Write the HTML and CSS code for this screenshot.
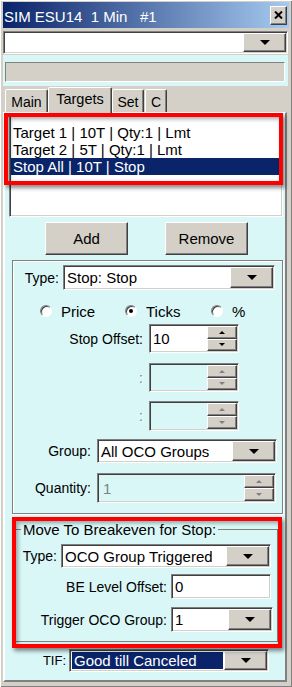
FILE: index.html
```html
<!DOCTYPE html>
<html>
<head>
<meta charset="utf-8">
<title>SIM ESU14 1 Min #1</title>
<link rel="stylesheet" href="styles.css">
</head>
<body>
<div class="window">
    <div class="titlebar">
        <span class="title">SIM ESU14  1 Min   #1</span>
        <span class="close"><svg width="9" height="8" viewBox="0 0 9 8"><path d="M1 0.5 L8 7.5 M8 0.5 L1 7.5" stroke="#000" stroke-width="2"/></svg></span>
    </div>

    <div class="combo top-combo">
        <div class="field"></div>
        <div class="drop"><i class="tri"></i></div>
    </div>

    <div class="strip"><div class="status"></div></div>

    <div class="tabs">
        <div class="tab tab-main">Main</div>
        <div class="tab tab-targets active">Targets</div>
        <div class="tab tab-set">Set</div>
        <div class="tab tab-c">C</div>
    </div>

    <div class="page">
        <div class="list">
            <div class="item">Target 1 | 10T | Qty:1 | Lmt</div>
            <div class="item">Target 2 | 5T | Qty:1 | Lmt</div>
            <div class="item selected">Stop All | 10T | Stop</div>
        </div>

        <div class="buttons">
            <div class="btn">Add</div>
            <div class="btn">Remove</div>
        </div>

        <div class="panel">
            <div class="row row-type">
                <span class="label">Type:</span>
                <div class="combo combo-type">
                    <div class="field">Stop: Stop</div>
                    <div class="drop"><i class="tri"></i></div>
                </div>
            </div>

            <div class="radios">
                <span class="opt opt-price"><i class="radio"></i>Price</span>
                <span class="opt opt-ticks"><i class="radio checked"></i>Ticks</span>
                <span class="opt"><i class="radio"></i>%</span>
            </div>

            <div class="row row-stop">
                <span class="label">Stop Offset:</span>
                <div class="spin spin-small">
                    <div class="field">10</div>
                    <div class="arrows">
                        <div class="arrow"><i class="up"></i></div>
                        <div class="arrow"><i class="down"></i></div>
                    </div>
                </div>
            </div>

            <div class="row row-dis1">
                <span class="label dim">:</span>
                <div class="spin spin-small disabled">
                    <div class="field"></div>
                    <div class="arrows">
                        <div class="arrow"><i class="up"></i></div>
                        <div class="arrow"><i class="down"></i></div>
                    </div>
                </div>
            </div>

            <div class="row row-dis2">
                <span class="label dim">:</span>
                <div class="spin spin-small disabled">
                    <div class="field"></div>
                    <div class="arrows">
                        <div class="arrow"><i class="up"></i></div>
                        <div class="arrow"><i class="down"></i></div>
                    </div>
                </div>
            </div>

            <div class="row row-group">
                <span class="label">Group:</span>
                <div class="combo combo-group">
                    <div class="field">All OCO Groups</div>
                    <div class="drop"><i class="tri"></i></div>
                </div>
            </div>

            <div class="row row-qty">
                <span class="label">Quantity:</span>
                <div class="spin spin-qty disabled">
                    <div class="field">1</div>
                    <div class="arrows">
                        <div class="arrow"><i class="up"></i></div>
                        <div class="arrow"><i class="down"></i></div>
                    </div>
                </div>
            </div>
        </div>

        <fieldset class="be">
            <legend>Move To Breakeven for Stop:</legend>
            <div class="row be-type">
                <span class="label">Type:</span>
                <div class="combo combo-be">
                    <div class="field">OCO Group Triggered</div>
                    <div class="drop"><i class="tri"></i></div>
                </div>
            </div>
            <div class="row be-offset">
                <span class="label">BE Level Offset:</span>
                <div class="textbox">0</div>
            </div>
            <div class="row be-trigger">
                <span class="label">Trigger OCO Group:</span>
                <div class="combo combo-trigger">
                    <div class="field">1</div>
                    <div class="drop"><i class="tri"></i></div>
                </div>
            </div>
        </fieldset>

        <div class="row row-tif">
            <span class="label">TIF:</span>
            <div class="combo combo-tif">
                <div class="field sel">Good till Canceled</div>
                <div class="drop"><i class="tri"></i></div>
            </div>
        </div>

        <div class="mark mark-list"></div>
        <div class="mark mark-be"></div>
    </div>
</div>
</body>
</html>
```

FILE: styles.css
```css
body {
    margin: 0;
    background: #d4d0c8;
    font-family: "Liberation Sans", Arial, sans-serif;
    font-size: 14px;
    color: #000;
}

.window {
    width: 292px;
    height: 687px;
    box-sizing: border-box;
    padding: 2px 3px 5px 3px;
    display: flex;
    flex-direction: column;
    background: #d4d0c8;
    box-shadow: inset 1px 1px #fff, inset -1px -1px #808080;
}

/* title bar */
.titlebar {
    flex: none;
    height: 26px;
    display: flex;
    align-items: center;
    justify-content: space-between;
    background: linear-gradient(to right, #0a246a, #a6caf0);
    color: #fff;
}
.title {
    white-space: pre;
    font-size: 15px;
    padding-left: 1px;
    padding-top: 3px;
}
.close {
    width: 15px;
    height: 17px;
    margin-right: 2px;
    background: #d4d0c8;
    border: 1px solid;
    border-color: #fff #404040 #404040 #fff;
    box-shadow: inset -1px -1px #808080;
    display: flex;
    align-items: center;
    justify-content: center;
}

/* shared controls */
.combo, .spin, .textbox {
    box-sizing: border-box;
    display: flex;
    border: 1px solid;
    border-color: #808080 #fff #fff #808080;
    box-shadow: inset 1px 1px #404040, inset -1px -1px #d4d0c8;
    padding: 1px;
    background: #fff;
}
.field {
    flex: 1;
    display: flex;
    align-items: center;
    padding-left: 2px;
    font-size: 15px;
    background: #fff;
    white-space: nowrap;
    overflow: hidden;
}
.field.sel {
    background: #0a246a;
    color: #fff;
    margin: 1px;
}
.drop {
    flex: none;
    width: 43px;
    box-sizing: border-box;
    border: 1px solid;
    border-color: #fff #404040 #404040 #fff;
    box-shadow: inset -1px -1px #808080;
    background: #d4d0c8;
    display: flex;
    align-items: center;
    justify-content: center;
}
.tri {
    width: 0;
    height: 0;
    border-left: 5px solid transparent;
    border-right: 5px solid transparent;
    border-top: 5px solid #000;
}
.arrows {
    flex: none;
    width: 30px;
    display: flex;
    flex-direction: column;
}
.arrow {
    flex: 1;
    box-sizing: border-box;
    border: 1px solid;
    border-color: #fff #404040 #404040 #fff;
    box-shadow: inset -1px -1px #808080;
    background: #d4d0c8;
    display: flex;
    align-items: center;
    justify-content: center;
}
.up, .down {
    width: 0;
    height: 0;
    border-left: 3px solid transparent;
    border-right: 3px solid transparent;
}
.up {
    border-bottom: 3px solid #000;
}
.down {
    border-top: 3px solid #000;
}
.disabled .field {
    background: #daf7f7;
    color: #808080;
}
.disabled .up {
    border-bottom-color: #808080;
}
.disabled .down {
    border-top-color: #808080;
}
.textbox {
    align-items: center;
    padding-left: 3px;
    font-size: 15px;
}

.top-combo {
    flex: none;
    margin-top: 3px;
    height: 23px;
    width: 285px;
}

.strip {
    flex: none;
    margin-top: 1px;
    margin-right: 1px;
    height: 31px;
    box-sizing: border-box;
    padding: 7px 3px 0 2px;
    background: #daf7f7;
}
.status {
    height: 20px;
    box-sizing: border-box;
    border: 1px solid;
    border-color: #808080 #fff #fff #808080;
    background: #d4d0c8;
}

/* tabs */
.tabs {
    flex: none;
    height: 26px;
    display: flex;
    align-items: flex-end;
    padding-left: 2px;
}
.tab {
    box-sizing: border-box;
    height: 23px;
    border: 1px solid;
    border-bottom: none;
    border-color: #fff #404040 transparent #fff;
    box-shadow: inset -1px 0 #808080;
    border-radius: 2px 2px 0 0;
    background: #d4d0c8;
    display: flex;
    align-items: center;
    justify-content: center;
    padding-top: 2px;
    font-size: 14px;
}
.tab.active {
    height: 26px;
    margin-bottom: -1px;
    padding-top: 0;
    padding-bottom: 3px;
    position: relative;
    z-index: 1;
    font-size: 14.5px;
}
.tab-main { width: 43px; }
.tab-targets { width: 64px; }
.tab-set { width: 32px; }
.tab-c { width: 22px; margin-left: 1px; }

/* tab page */
.page {
    flex: 1;
    position: relative;
    margin-right: 2px;
    background: #daf7f7;
    border-top: 1px solid #fff;
    border-left: 2px solid #fff;
    border-right: 2px solid #808080;
    border-bottom: 2px solid #808080;
}

.list {
    margin: 0 2px 0 4px;
    height: 104px;
    box-sizing: border-box;
    border: 1px solid;
    border-color: #808080 #fff #fff #808080;
    box-shadow: inset 1px 1px #404040, inset -1px -1px #d4d0c8;
    padding: 10px 1px 0 1px;
    background: #fff;
}
.item {
    height: 17px;
    line-height: 17px;
    padding-left: 2px;
    font-size: 15px;
    white-space: nowrap;
}
.item.selected {
    background: #0a246a;
    color: #fff;
}

.buttons {
    display: flex;
    margin-top: 5px;
    padding-left: 40px;
    gap: 37px;
}
.btn {
    width: 83px;
    height: 33px;
    box-sizing: border-box;
    border: 1px solid;
    border-color: #fff #404040 #404040 #fff;
    box-shadow: inset -1px -1px #808080;
    background: #d4d0c8;
    display: flex;
    align-items: center;
    justify-content: center;
    font-size: 15px;
}

.panel {
    margin: 5px 2px 0 7px;
    border: 1px solid #808080;
    box-shadow: inset 1px 1px #fff, 1px 1px #fff;
    padding: 4px 0 10px 0;
}
.row {
    display: flex;
    align-items: center;
}
.label {
    flex: none;
    text-align: right;
    white-space: nowrap;
    font-size: 14px;
}
.label.dim {
    color: #808080;
    text-shadow: 1px 1px #fff;
}

.row-type { height: 25px; }
.row-type .label { width: 46px; margin-right: 4px; }
.combo-type { width: 212px; height: 25px; }

.radios {
    display: flex;
    align-items: center;
    margin-top: 11px;
    height: 20px;
    padding-left: 27px;
}
.opt {
    display: flex;
    align-items: center;
    font-size: 15px;
}
.opt-price { width: 85px; }
.opt-ticks { width: 86px; }
.radio {
    width: 12px;
    height: 12px;
    box-sizing: border-box;
    margin-right: 9px;
    border-radius: 50%;
    border: 1px solid;
    border-color: #808080 #fff #fff #808080;
    box-shadow: inset 1px 1px #404040;
    background: #fff;
    display: flex;
    align-items: center;
    justify-content: center;
}
.radio.checked::after {
    content: "";
    width: 4px;
    height: 4px;
    border-radius: 50%;
    background: #000;
}

.row-stop { margin-top: 3px; height: 29px; }
.row-dis1 { margin-top: 10px; height: 29px; }
.row-dis2 { margin-top: 9px; height: 30px; }
.row-stop .label, .row-dis1 .label, .row-dis2 .label { width: 130px; margin-right: 6px; }
.spin-small { width: 90px; height: 100%; }

.row-group { margin-top: 8px; height: 24px; }
.row-group .label, .row-qty .label { width: 78px; margin-right: 6px; }
.combo-group { width: 180px; height: 24px; }

.row-qty { margin-top: 10px; height: 30px; }
.spin-qty { width: 179px; height: 30px; }
.spin-qty .field { padding-left: 4px; }

/* breakeven group */
.be {
    margin: 7px 7px 0 9px;
    padding: 0 0 9px 0;
    border: 1px solid #808080;
    min-width: 0;
}
.be legend {
    font-size: 15px;
    line-height: 17px;
    padding: 0 2px;
    margin-left: 6px;
}
.be-type { margin-top: 6px; height: 24px; }
.be-type .label { width: 42px; margin-right: 4px; }
.combo-be { width: 210px; height: 24px; }
.be-offset { margin-top: 6px; height: 25px; }
.be-trigger { margin-top: 8px; height: 25px; }
.be-offset .label, .be-trigger .label { width: 152px; margin-right: 4px; }
.be-offset .textbox { width: 100px; height: 25px; }
.combo-trigger { width: 102px; height: 25px; }

.row-tif { margin-top: 7px; height: 23px; }
.row-tif .label { width: 61px; margin-right: 3px; font-size: 13px; }
.combo-tif { width: 200px; height: 23px; }

/* red highlight boxes laid over the form */
.mark {
    position: absolute;
    box-sizing: border-box;
    border: 4px solid #f00;
    box-shadow: 2px 3px 4px rgba(0, 0, 0, 0.45), inset 2px 2px 4px rgba(0, 0, 0, 0.35);
}
.mark-list {
    left: -1px;
    top: 0;
    width: 279px;
    height: 72px;
}
.mark-be {
    left: 7px;
    top: 404px;
    width: 270px;
    height: 131px;
}
```
